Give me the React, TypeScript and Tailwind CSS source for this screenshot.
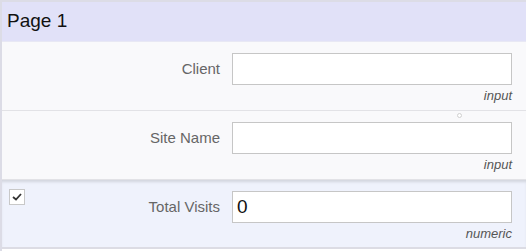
type Field = { label: string; value: string; hint: string; checked?: boolean }

const fields: Field[] = [
  { label: "Client", value: "", hint: "input" },
  { label: "Site Name", value: "", hint: "input" },
  { label: "Total Visits", value: "0", hint: "numeric", checked: true },
]

function Row({ field, last }: { field: Field; last?: boolean }) {
  const active = field.checked !== undefined
  return (
    <div
      className={
        "relative flex h-[69px] flex-col pr-[14px] pt-[11px] " +
        (active
          ? "bg-[#eff2fc] shadow-[inset_0_3px_3px_-1px_rgba(0,0,0,0.12)]"
          : "bg-[#f9f9fb]") +
        (last ? " border-b-2 border-[#dcdce4]" : " border-b border-[#e2e2e6]")
      }
    >
      {active && (
        <div className="absolute left-[7px] top-[9px] flex h-[16px] w-[16px] items-center justify-center border border-[#c8c8c8] bg-white">
          <svg width="10" height="8" viewBox="0 0 10 8">
            <path d="M1 4 L4 6.5 L9 1" fill="none" stroke="#333" strokeWidth="1.8" />
          </svg>
        </div>
      )}
      <div className="flex items-center">
        <div className="w-[230px] pr-[12px] text-right text-[15px] text-[#666]">{field.label}</div>
        <div className="flex h-[32px] flex-1 items-center border border-[#c6c6c6] bg-white px-[4px] text-[19px] text-[#111]">
          {field.value}
        </div>
      </div>
      <div className="mt-[1px] text-right text-[13px] italic text-[#555]">{field.hint}</div>
    </div>
  )
}

export default function App() {
  return (
    <div className="h-[251px] w-[526px] overflow-hidden border-l-2 border-t-2 border-[#dcdce6] bg-white font-['Liberation_Sans']">
      <div className="flex h-[40px] items-center border-b border-[#e8e8f4] bg-[#e1e1f8] pl-[5px] text-[19px] text-[#111]">
        Page 1
      </div>
      <div className="relative">
        {fields.map((f, i) => (
          <Row key={f.label} field={f} last={i === fields.length - 1} />
        ))}
        <div className="absolute left-[455px] top-[71px] h-[5px] w-[5px] rounded-full border border-[#d0d0d0] bg-white" />
      </div>
    </div>
  )
}
